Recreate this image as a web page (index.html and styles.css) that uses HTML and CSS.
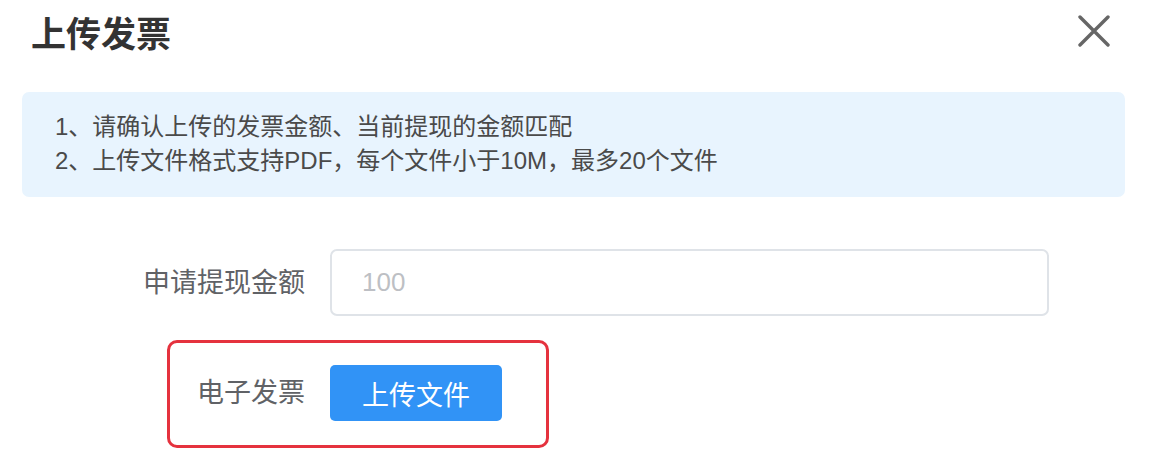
FILE: index.html
```html
<!DOCTYPE html>
<html lang="zh-CN">
<head>
<meta charset="utf-8">
<title>上传发票</title>
<link rel="stylesheet" href="styles.css">
</head>
<body>
<div class="dialog">
  <div class="dialog-header">
    <h1 class="dialog-title">上传发票</h1>
    <button class="dialog-close" aria-label="关闭">
      <svg width="32" height="32" viewBox="0 0 32 32"><path d="M2 2 L30 30 M30 2 L2 30" stroke="#666666" stroke-width="3.4" stroke-linecap="round" fill="none"/></svg>
    </button>
  </div>
  <div class="alert">
    <p class="alert-line">1、请确认上传的发票金额、当前提现的金额匹配</p>
    <p class="alert-line">2、上传文件格式支持PDF，每个文件小于10M，最多20个文件</p>
  </div>
  <form class="form">
    <div class="form-item">
      <label class="form-label">申请提现金额</label>
      <input class="form-input" type="text" placeholder="100">
    </div>
    <div class="form-item form-item--boxed">
      <label class="form-label">电子发票</label>
      <button type="button" class="btn-primary">上传文件</button>
    </div>
  </form>
</div>
</body>
</html>
```
FILE: styles.css
```css
* { box-sizing: border-box; }
html, body { margin: 0; padding: 0; background: #fff; }
body {
  font-family: "Liberation Sans", "Noto Sans CJK SC", sans-serif;
  color: #333;
  width: 1150px;
  height: 463px;
  overflow: hidden;
}
.dialog { padding: 0; }
.dialog-header {
  display: flex;
  justify-content: space-between;
  align-items: center;
  height: 66px;
  padding: 0 40px 0 31px;
}
.dialog-title {
  margin: 0;
  font-size: 35px;
  line-height: 40px;
  font-weight: bold;
  color: #333;
  transform: translateY(2px);
}
.dialog-close {
  border: 0;
  background: none;
  padding: 0;
  width: 32px;
  height: 32px;
  display: flex;
  transform: translateY(-2px);
}
.alert {
  margin: 26px 25px 0 22px;
  background: #e8f4fe;
  border-radius: 7px;
  padding: 18px 33px 19px;
  height: 105px;
}
.alert-line {
  margin: 0;
  font-size: 24px;
  line-height: 34px;
  color: #4a4a4a;
  white-space: nowrap;
}
.form { margin-top: 52px; }
.form-item {
  display: flex;
  align-items: center;
  margin-left: 120px;
}
.form-label {
  width: 210px;
  padding-right: 25px;
  text-align: right;
  font-size: 27px;
  line-height: 40px;
  color: #606266;
}
.form-input {
  width: 719px;
  height: 67px;
  border: 2px solid #dfe3e8;
  border-radius: 7px;
  padding: 0 30px;
  font-family: inherit;
  font-size: 26px;
  color: #606266;
  outline: none;
}
.form-input::placeholder { color: #bdbfc4; }
.form-item--boxed {
  margin-top: 24px;
  margin-left: 167px;
  width: 382px;
  height: 108px;
  border: 3px solid #e5323e;
  border-radius: 10px;
  padding: 0 0 2px 0;
}
.form-item--boxed .form-label { width: 160px; }
.btn-primary {
  width: 172px;
  height: 56px;
  border: 0;
  border-radius: 5px;
  background: #3193f6;
  color: #fff;
  font-family: inherit;
  font-size: 27px;
  padding: 0;
}
```
